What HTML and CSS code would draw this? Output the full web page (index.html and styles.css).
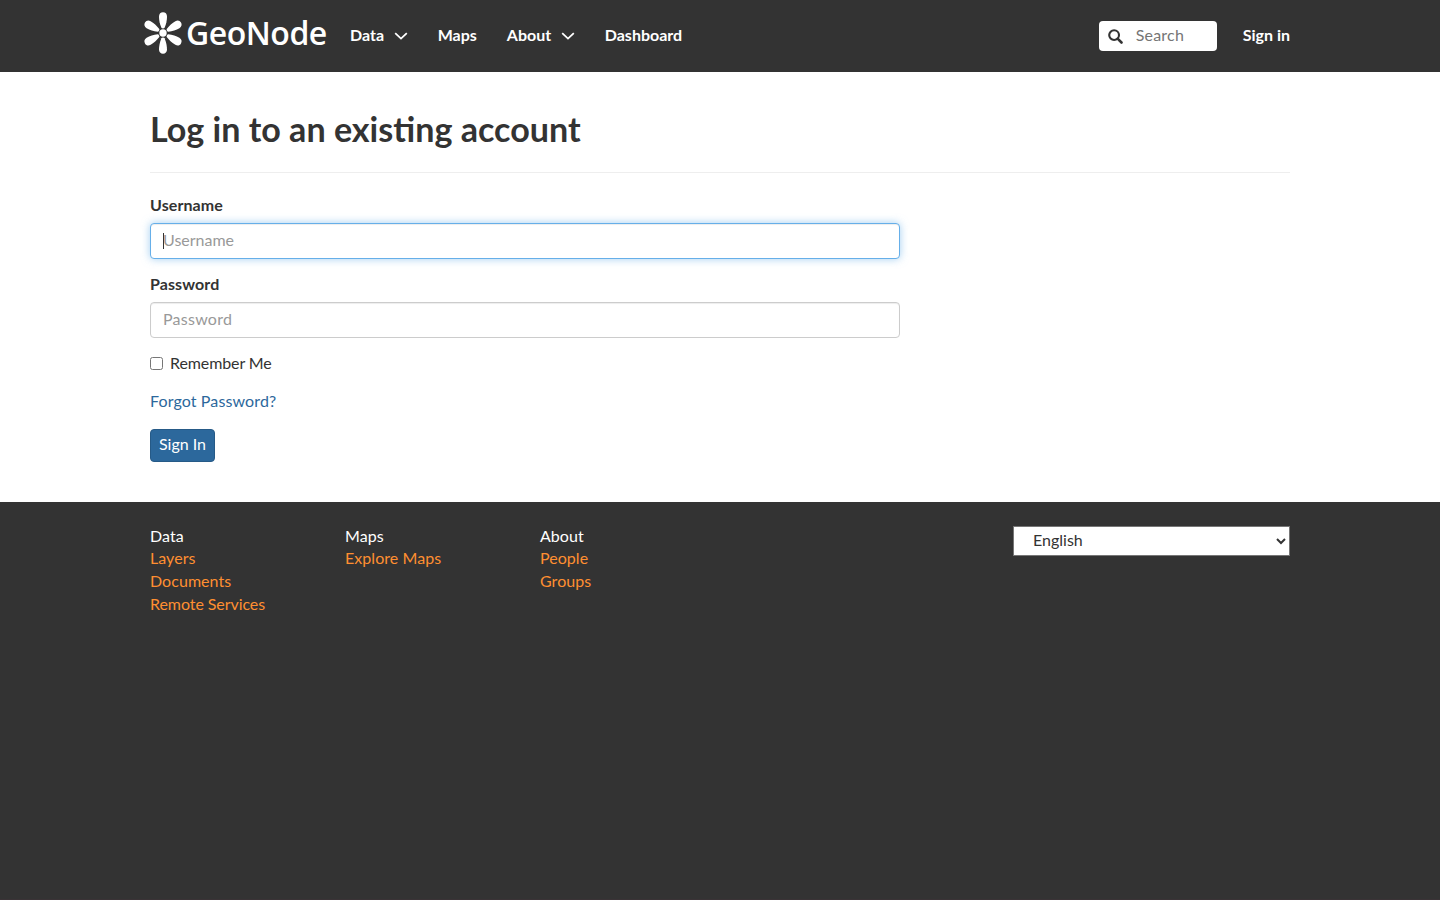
FILE: index.html
```html
<!DOCTYPE html>
<html lang="en">
<head>
<meta charset="utf-8">
<title>Sign in - GeoNode</title>
<link rel="stylesheet" href="styles.css">
</head>
<body>
<header class="navbar">
  <div class="container navbar-row">
    <a class="brand" aria-label="GeoNode">
      <svg class="brand-logo" width="186" height="48" viewBox="0 0 186 48" fill="#fff">
        <defs><path id="petal" d="M-1.6-5.2C-3.2-9-4-13-4-16.6C-4-19.2-2.4-20.8 0-20.8S4-19.2 4-16.6C4-13 3.2-9 1.6-5.2C1.2-4.4-1.2-4.4-1.6-5.2Z"/></defs>
        <g transform="translate(21 25)">
          <circle r="3.7"/>
          <use href="#petal"/>
          <use href="#petal" transform="rotate(60)"/>
          <use href="#petal" transform="rotate(120)"/>
          <use href="#petal" transform="rotate(180)"/>
          <use href="#petal" transform="rotate(240)"/>
          <use href="#petal" transform="rotate(300)"/>
        </g>
        <text class="brand-name" x="44" y="37.3" textLength="141.3" lengthAdjust="spacing">GeoNode</text>
      </svg>
    </a>
    <nav class="menu">
      <a>Data<svg class="chevron" width="14" height="8" viewBox="0 0 14 8"><path d="M1.2 1.2L7 6.6L12.8 1.2"/></svg></a>
      <a>Maps</a>
      <a>About<svg class="chevron" width="14" height="8" viewBox="0 0 14 8"><path d="M1.2 1.2L7 6.6L12.8 1.2"/></svg></a>
      <a>Dashboard</a>
    </nav>
    <div class="search">
      <svg width="15" height="15" viewBox="0 0 15 15" fill="none" stroke="#333" stroke-width="2.1"><circle cx="6.1" cy="6.1" r="4.9"/><path d="M9.6 9.6L13.5 13.5" stroke-width="2.6" stroke-linecap="round"/></svg>
      <input class="search-input" type="text" placeholder="Search">
    </div>
    <a class="sign-in">Sign in</a>
  </div>
</header>
<main class="container content">
  <h1 class="title">Log in to an existing account</h1>
  <form class="login">
    <label class="label" for="user">Username</label>
    <div class="field">
      <input class="control control-active" id="user" type="text" placeholder="Username">
      <span class="caret"></span>
    </div>
    <label class="label" for="pass">Password</label>
    <div class="field"><input class="control control-password" id="pass" type="password" placeholder="Password"></div>
    <label class="remember"><input class="check" type="checkbox">Remember Me</label>
    <p class="forgot"><a>Forgot Password?</a></p>
    <button class="submit" type="button">Sign In</button>
  </form>
</main>
<footer class="footer">
  <div class="container footer-row">
    <ul class="links"><li class="heading">Data</li><li>Layers</li><li>Documents</li><li class="long">Remote Services</li></ul>
    <ul class="links"><li class="heading">Maps</li><li>Explore Maps</li></ul>
    <ul class="links"><li class="heading">About</li><li>People</li><li>Groups</li></ul>
    <select class="language"><option>English</option></select>
  </div>
</footer>
</body>
</html>
```

FILE: styles.css
```css
* { box-sizing: border-box; }
body {
  margin: 0;
  min-height: 100vh;
  display: flex;
  flex-direction: column;
  font: 16px/22.85px Lato, sans-serif;
  color: #333;
  background: #fff;
}
input, select, button { font: inherit; color: inherit; }
.container { width: 1140px; margin: 0 auto; }
.navbar { height: 72px; background: #333; color: #fff; font-weight: 700; }
.navbar-row { display: flex; align-items: center; height: 72px; }
.brand { align-self: flex-start; margin: 8px 0 0 -8px; height: 48px; }
.brand-logo { display: block; }
.brand-name { font: 600 32px "Open Sans", "Noto Sans", sans-serif; }
.menu { display: flex; gap: 30px; margin-left: 22px; padding-bottom: 2px; }
.menu a { display: flex; align-items: center; }
.chevron { margin: 2px 0 0 10px; margin-right: -.4px; fill: none; stroke: #fff; stroke-width: 1.8; }
.search {
  display: flex;
  align-items: center;
  gap: 13px;
  width: 118px;
  height: 30px;
  margin-left: auto;
  padding: 0 9px;
  border-radius: 4px;
  background: #fff;
}
.search svg { flex: none; margin-top: 1px; }
.search-input { width: 70px; padding: 0 0 2px; border: 0; outline: 0; background: none; font-weight: 400; letter-spacing: .2px; }
.search-input::placeholder { color: #757575; }
.sign-in { margin-left: 26px; padding-bottom: 2px; }
.content { height: 430px; padding-top: 37px; }
.title {
  margin: 0 0 21px;
  padding-bottom: 23px;
  border-bottom: 1px solid #eee;
  font-size: 34.1px;
  line-height: 40px;
  font-weight: 700;
}
.login { width: 750px; }
.label { display: block; height: 23px; margin-bottom: 6px; font-weight: 700; letter-spacing: .1px; }
.field { position: relative; height: 36px; margin-bottom: 14px; }
.control {
  display: block;
  width: 100%;
  height: 36px;
  padding: 4px 12px 8px;
  border: 1px solid #ccc;
  border-radius: 4px;
  outline: 0;
  background: #fff;
  box-shadow: inset 0 1px 1px rgba(0, 0, 0, .075);
}
.control::placeholder { color: #999; }
.control-password { letter-spacing: .25px; }
.control-active {
  border-color: #66afe9;
  box-shadow: inset 0 1px 1px rgba(0, 0, 0, .075), 0 0 8px rgba(102, 175, 233, .6);
}
.caret { position: absolute; left: 13px; top: 10px; width: 1px; height: 16px; background: #333; }
.remember { display: flex; align-items: center; height: 23px; letter-spacing: -.1px; }
.check { width: 13px; height: 13px; margin: 0 7px 0 0; }
.forgot { margin: 15px 0; height: 24px; color: #2c689c; letter-spacing: .12px; }
.submit {
  display: block;
  width: 65px;
  height: 33px;
  padding: 0 0 2px;
  border: 1px solid #265a87;
  border-radius: 4px;
  background: #2c689c;
  color: #fff;
}
.footer { flex: 1; background: #333; border-bottom: 1px solid #3a3336; padding-top: 23px; }
.footer-row { display: flex; align-items: flex-start; }
.links { width: 195px; margin: 0; padding: 0; list-style: none; color: #ff8f31; letter-spacing: .05px; }
.links .heading { height: 22px; color: #fff; }
.links .long { letter-spacing: -.07px; }
.language {
  width: 277px;
  height: 30px;
  margin: 1px 0 0 auto;
  padding: 0 0 3px 15px;
  border: 1px solid #767676;
  border-radius: 0;
  background: #fff;
}
```
